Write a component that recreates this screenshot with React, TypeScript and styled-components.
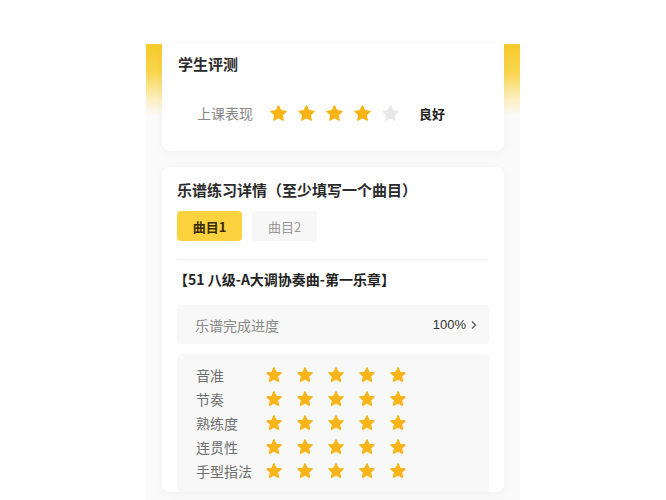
import React from "react";
import styled, { createGlobalStyle } from "styled-components";

const GlobalStyle = createGlobalStyle`
  html, body {
    margin: 0;
    padding: 0;
    background: #fff;
    font-family: "Noto Sans CJK SC", "Noto Sans", sans-serif;
  }
`;

const Page = styled.div`
  display: flex;
  justify-content: center;
  padding-top: 44px;
  height: 456px;
  overflow: hidden;
`;

const Column = styled.div`
  width: 342px;
  padding: 0 16px;
  background: linear-gradient(
    to bottom,
    #f8cb2c 0px,
    #f9d54c 28px,
    #fdf0c4 56px,
    #fafafa 72px,
    #fafafa 100%
  );
  display: flex;
  flex-direction: column;
  gap: 16px;
`;

const Card = styled.div<{ $first?: boolean }>`
  background: #fff;
  border-radius: ${(p) => (p.$first ? "0 0 8px 8px" : "8px")};
  box-shadow: 0 2px 10px rgba(0, 0, 0, 0.04);
  padding: ${(p) => (p.$first ? "9px 15px 24px 16px" : "12px 15px 0 15px")};
  display: flex;
  flex-direction: column;
`;

const Title = styled.div`
  font-size: 15px;
  line-height: 22px;
  font-weight: 600;
  color: #2b2b2b;
`;

const ClassRow = styled.div`
  display: flex;
  align-items: center;
  height: 28px;
  margin-top: 24px;
  padding-left: 19px;
`;

const ClassLabel = styled.span`
  font-size: 14px;
  color: #888;
  width: 72px;
`;

const Stars = styled.div<{ $gap: number }>`
  display: flex;
  align-items: center;
  gap: ${(p) => p.$gap}px;
`;

const Grade = styled.span`
  margin-left: 19px;
  font-size: 13px;
  font-weight: 600;
  color: #222;
`;

const Tabs = styled.div`
  display: flex;
  gap: 10px;
  margin-top: 10px;
`;

const Tab = styled.div<{ $active?: boolean }>`
  width: 65px;
  height: 30px;
  border-radius: 4px;
  display: flex;
  align-items: center;
  justify-content: center;
  font-size: 13px;
  font-weight: ${(p) => (p.$active ? 600 : 400)};
  color: ${(p) => (p.$active ? "#3a2c00" : "#999")};
  background: ${(p) => (p.$active ? "#fcd33f" : "#f7f7f7")};
`;

const Divider = styled.div`
  height: 1px;
  background: #f1f1f1;
  margin-top: 18px;
`;

const SongTitle = styled.div`
  font-size: 14px;
  line-height: 20px;
  font-weight: 600;
  color: #222;
  margin-top: 9px;
  margin-left: -3px;
`;

const ProgressRow = styled.div`
  margin-top: 16px;
  height: 39px;
  background: #f8f8f8;
  border-radius: 4px;
  display: flex;
  align-items: center;
  justify-content: space-between;
  padding: 0 11px 0 18px;
`;

const ProgressLabel = styled.span`
  font-size: 14px;
  color: #888;
`;

const ProgressValue = styled.span`
  font-family: "Liberation Sans", "Noto Sans CJK SC", sans-serif;
  font-size: 13px;
  color: #333;
  display: flex;
  align-items: center;
  gap: 4px;
`;

const RatingBox = styled.div`
  margin-top: 10px;
  background: #f8f8f8;
  border-radius: 4px;
  padding: 9px 20px 9px 19px;
  display: flex;
  flex-direction: column;
`;

const RatingRow = styled.div`
  display: flex;
  align-items: center;
  height: 24px;
`;

const RatingLabel = styled.span`
  width: 69px;
  font-size: 14px;
  color: #6e6e6e;
`;

const StarIcon = ({ size, on = true }: { size: number; on?: boolean }) => (
  <svg width={size} height={size} viewBox="0 0 24 24">
    <path
      d="M12 2.2l2.95 6.15 6.75.85-4.95 4.65 1.25 6.7L12 17.3l-6 3.25 1.25-6.7L2.3 9.2l6.75-.85z"
      fill={on ? "#f9b418" : "#e9e9e9"}
      stroke={on ? "#f9b418" : "#e9e9e9"}
      strokeWidth="1.6"
      strokeLinejoin="round"
    />
  </svg>
);

const StarRow = ({ count, size, gap }: { count: number; size: number; gap: number }) => (
  <Stars $gap={gap}>
    {[0, 1, 2, 3, 4].map((i) => (
      <StarIcon key={i} size={size} on={i < count} />
    ))}
  </Stars>
);

const ratings = ["音准", "节奏", "熟练度", "连贯性", "手型指法"];

export default function App() {
  return (
    <>
      <GlobalStyle />
      <Page>
        <Column>
          <Card $first>
            <Title>学生评测</Title>
            <ClassRow>
              <ClassLabel>上课表现</ClassLabel>
              <StarRow count={4} size={19} gap={9} />
              <Grade>良好</Grade>
            </ClassRow>
          </Card>

          <Card>
            <Title>乐谱练习详情（至少填写一个曲目）</Title>
            <Tabs>
              <Tab $active>曲目1</Tab>
              <Tab>曲目2</Tab>
            </Tabs>
            <Divider />
            <SongTitle>【51 八级-A大调协奏曲-第一乐章】</SongTitle>
            <ProgressRow>
              <ProgressLabel>乐谱完成进度</ProgressLabel>
              <ProgressValue>
                100%
                <svg width="8" height="10" viewBox="0 0 8 10">
                  <path d="M2 1.5L5.5 5 2 8.5" fill="none" stroke="#555" strokeWidth="1.2" />
                </svg>
              </ProgressValue>
            </ProgressRow>
            <RatingBox>
              {ratings.map((r) => (
                <RatingRow key={r}>
                  <RatingLabel>{r}</RatingLabel>
                  <StarRow count={5} size={18} gap={13} />
                </RatingRow>
              ))}
            </RatingBox>
          </Card>
        </Column>
      </Page>
    </>
  );
}
